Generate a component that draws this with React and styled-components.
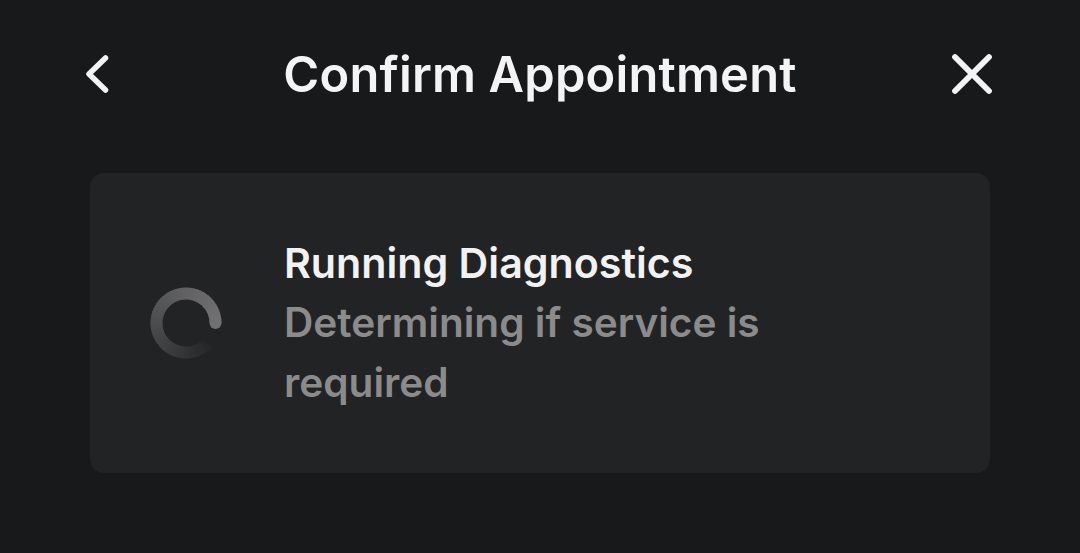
import React from "react";
import styled, { createGlobalStyle } from "styled-components";

const Global = createGlobalStyle`
  html, body { margin: 0; padding: 0; background: #18191b; }
  body { font-family: Inter, "Noto Sans", sans-serif; }
`;

const Page = styled.div`
  width: 1080px;
  height: 553px;
  background: #18191b;
  box-sizing: border-box;
  padding: 44px 90px 0 90px;
  display: flex;
  flex-direction: column;
  gap: 69px;
`;

const Header = styled.div`
  display: grid;
  grid-template-columns: 80px 1fr 80px;
  align-items: center;
  height: 60px;
  margin: 0 -4px;
`;

const IconButton = styled.button`
  background: none;
  border: 0;
  padding: 0;
  width: 80px;
  height: 60px;
  display: flex;
  align-items: center;
  justify-content: ${(p) => (p.$end ? "flex-end" : "flex-start")};
  color: #f4f4f4;
  cursor: pointer;
`;

const Title = styled.h1`
  margin: 0;
  text-align: center;
  color: #f4f4f4;
  font-size: 48.8px;
  font-weight: 600;
  letter-spacing: 0.2px;
`;

const Card = styled.div`
  height: 300px;
  background: #222325;
  border-radius: 14px;
  display: flex;
  align-items: center;
  padding-left: 56px;
  box-sizing: border-box;
  gap: 58px;
`;

const Spinner = styled.svg`
  flex: none;
`;

const TextBlock = styled.div`
  width: 500px;
  display: flex;
  flex-direction: column;
`;

const CardTitle = styled.div`
  color: #f2f2f2;
  font-size: 41.2px;
  font-weight: 600;
  line-height: 60px;
`;

const CardSub = styled.div`
  color: #8b8b8b;
  font-size: 40.6px;
  font-weight: 600;
  line-height: 60px;
`;

function SpinnerIcon() {
  const cx = 40, cy = 40, r = 29.5;
  const total = 315;
  const n = 63;
  const segs = [];
  const mix = (t) => {
    const a = [0x70, 0x70, 0x71];
    const b = [0x24, 0x25, 0x27];
    const k = Math.pow(t, 1.3);
    return `rgb(${a.map((v, i) => Math.round(v + (b[i] - v) * k)).join(",")})`;
  };
  for (let i = n - 1; i >= 0; i--) {
    const a0 = (-(i * total) / n) * (Math.PI / 180);
    const a1 = (-((i + 1.3) * total) / n) * (Math.PI / 180);
    const x0 = cx + r * Math.cos(a0), y0 = cy + r * Math.sin(a0);
    const x1 = cx + r * Math.cos(a1), y1 = cy + r * Math.sin(a1);
    segs.push(
      <path
        key={i}
        d={`M${x0.toFixed(2)} ${y0.toFixed(2)} A${r} ${r} 0 0 0 ${x1.toFixed(2)} ${y1.toFixed(2)}`}
        fill="none"
        stroke={mix(i / n)}
        strokeWidth="12"
      />
    );
  }
  return (
    <Spinner width="80" height="80" viewBox="0 0 80 80">
      {segs}
      <circle cx={cx + r} cy={cy} r="6" fill="rgb(112,112,113)" />
    </Spinner>
  );
}

export default function App() {
  return (
    <>
      <Global />
      <Page>
        <Header>
          <IconButton aria-label="Back">
            <svg width="24" height="38" viewBox="0 0 24 38">
              <path d="M19.5 3 L3 19 L19.5 35" fill="none" stroke="currentColor" strokeWidth="5.5" strokeLinecap="round" strokeLinejoin="round" />
            </svg>
          </IconButton>
          <Title>Confirm Appointment</Title>
          <IconButton $end aria-label="Close">
            <svg width="44" height="44" viewBox="0 0 44 44">
              <path d="M5 5 L39 39 M39 5 L5 39" fill="none" stroke="currentColor" strokeWidth="5.8" strokeLinecap="round" />
            </svg>
          </IconButton>
        </Header>
        <Card>
          <SpinnerIcon />
          <TextBlock>
            <CardTitle>Running Diagnostics</CardTitle>
            <CardSub>Determining if service is required</CardSub>
          </TextBlock>
        </Card>
      </Page>
    </>
  );
}
